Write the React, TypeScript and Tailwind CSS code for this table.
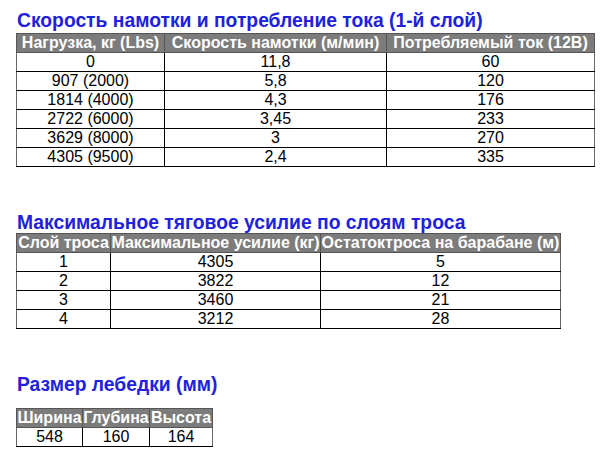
import React from 'react';

type Table = {
  cols: number[];
  head: string[];
  rows: string[][];
};

const speed: Table = {
  cols: [148, 222, 208],
  head: ['Нагрузка, кг (Lbs)', 'Скорость намотки (м/мин)', 'Потребляемый ток (12В)'],
  rows: [
    ['0', '11,8', '60'],
    ['907 (2000)', '5,8', '120'],
    ['1814 (4000)', '4,3', '176'],
    ['2722 (6000)', '3,45', '233'],
    ['3629 (8000)', '3', '270'],
    ['4305 (9500)', '2,4', '335'],
  ],
};

const pull: Table = {
  cols: [94, 210, 240],
  head: ['Слой троса', 'Максимальное усилие (кг)', 'Остатоктроса на барабане (м)'],
  rows: [
    ['1', '4305', '5'],
    ['2', '3822', '12'],
    ['3', '3460', '21'],
    ['4', '3212', '28'],
  ],
};

const size: Table = {
  cols: [66, 67, 63],
  head: ['Ширина', 'Глубина', 'Высота'],
  rows: [['548', '160', '164']],
};

function Title({ children, className }: { children: React.ReactNode; className?: string }) {
  return (
    <h2 className={`text-[19.3px] leading-[19px] font-bold text-[#2121dd] whitespace-nowrap ${className ?? ''}`}>
      {children}
    </h2>
  );
}

function DataTable({ data }: { data: Table }) {
  return (
    <table className="border-collapse table-fixed text-[16px] leading-[18px]">
      <colgroup>
        {data.cols.map((w, i) => (
          <col key={i} style={{ width: w }} />
        ))}
      </colgroup>
      <thead>
        <tr className="bg-[#7c7c7c]">
          {data.head.map((h) => (
            <th
              key={h}
              className="border border-[#555] p-0 text-center font-bold text-white whitespace-nowrap overflow-visible"
            >
              {h}
            </th>
          ))}
        </tr>
      </thead>
      <tbody>
        {data.rows.map((r, i) => (
          <tr key={i} className="bg-white">
            {r.map((c, j) => (
              <td
                key={j}
                className="border border-black first:border-l-[#666] last:border-r-[#666] p-0 text-center text-black"
              >
                {c}
              </td>
            ))}
          </tr>
        ))}
      </tbody>
    </table>
  );
}

export default function App() {
  return (
    <div className="w-[600px] h-[462px] bg-white pl-4 pt-[11px] font-['Liberation_Sans',Arial,sans-serif] overflow-hidden">
      <Title className="pl-[1px] mb-[3px]">Скорость намотки и потребление тока (1-й слой)</Title>
      <DataTable data={speed} />

      <Title className="pl-[1px] mt-[46px] mb-[1px]">Максимальное тяговое усилие по слоям троса</Title>
      <DataTable data={pull} />

      <Title className="pl-[1px] mt-[46px] mb-[14px]">Размер лебедки (мм)</Title>
      <DataTable data={size} />
    </div>
  );
}
